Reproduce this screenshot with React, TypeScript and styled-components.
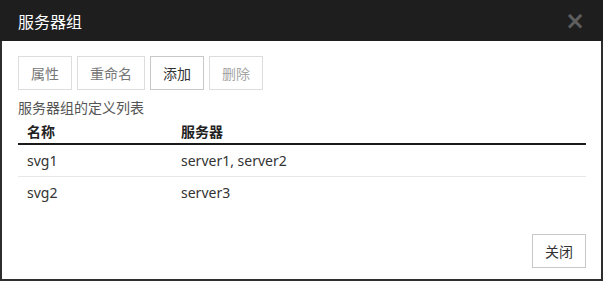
import * as React from 'react';
import styled, { createGlobalStyle } from 'styled-components';

const GlobalStyle = createGlobalStyle`
    html, body {
        margin: 0;
        padding: 0;
        background: #ffffff;
    }
    body {
        font-family: 'Noto Sans', 'Noto Sans CJK SC', sans-serif;
        font-size: 14px;
        color: #333333;
    }
`;

const Dialog = styled.div`
    width: 603px;
    height: 281px;
    display: flex;
    flex-direction: column;
    box-sizing: border-box;
`;

const Header = styled.div`
    height: 41px;
    flex: none;
    display: flex;
    align-items: center;
    justify-content: space-between;
    padding: 0 18px 0 18px;
    background-color: #1e1e1e;
    color: #ffffff;
`;

const Title = styled.h1`
    margin: 0;
    font-size: 16px;
    font-weight: 400;
    font-family: 'Noto Sans CJK SC', sans-serif;
`;

const CloseIcon = styled.span`
    font-family: 'DejaVu Sans', sans-serif;
    font-size: 24px;
    font-weight: 700;
    color: #5e5e5e;
    line-height: 1;
    margin-top: 1px;
`;

const Body = styled.div`
    flex: 1;
    display: flex;
    flex-direction: column;
    border: 2px solid #2e2e2e;
    border-top: none;
    padding: 15px 15px 11px 16px;
`;

const Toolbar = styled.div`
    display: flex;
    gap: 5px;
`;

type ButtonProps = {
    tone: 'normal' | 'active' | 'disabled'
};

const Button = styled.button<ButtonProps>`
    height: 34px;
    padding: 0 12px;
    background: #ffffff;
    font-family: 'Noto Sans CJK SC', sans-serif;
    font-size: 14px;
    border: 1px solid ${props => props.tone === 'active' ? '#c8c8c8' : '#dddddd'};
    color: ${props => props.tone === 'active' ? '#333333' : props.tone === 'disabled' ? '#a5a5a5' : '#777777'};
`;

const Caption = styled.div`
    margin-top: 8px;
    color: #555555;
    font-family: 'Noto Sans CJK SC', sans-serif;
    line-height: 18px;
`;

const Table = styled.table`
    border-collapse: collapse;
    width: 100%;
    margin-top: 2px;
`;

const HeadCell = styled.th<{ width?: number }>`
    text-align: left;
    font-weight: 700;
    font-family: 'Noto Sans CJK SC', sans-serif;
    color: #222222;
    height: 25px;
    padding: 0 9px;
    border-bottom: 2px solid #1a1a1a;
    width: ${props => props.width ? props.width + 'px' : 'auto'};
`;

const Row = styled.tr`
    & + & td {
        border-top: 1px solid #e8e8e8;
    }
`;

const Cell = styled.td`
    height: 31px;
    padding: 0 9px;
    color: #333333;
    font-family: 'Noto Sans', 'Noto Sans CJK SC', sans-serif;
`;

const Footer = styled.div`
    margin-top: auto;
    display: flex;
    justify-content: flex-end;
`;

const servers = [
    { name: 'svg1', members: 'server1, server2' },
    { name: 'svg2', members: 'server3' },
];

const App: React.FC = () => {
    return (
        <>
            <GlobalStyle />
            <Dialog>
                <Header>
                    <Title>服务器组</Title>
                    <CloseIcon>×</CloseIcon>
                </Header>
                <Body>
                    <Toolbar>
                        <Button tone="normal">属性</Button>
                        <Button tone="normal">重命名</Button>
                        <Button tone="active">添加</Button>
                        <Button tone="disabled">删除</Button>
                    </Toolbar>
                    <Caption>服务器组的定义列表</Caption>
                    <Table>
                        <thead>
                            <tr>
                                <HeadCell width={136}>名称</HeadCell>
                                <HeadCell>服务器</HeadCell>
                            </tr>
                        </thead>
                        <tbody>
                            {servers.map(s => (
                                <Row key={s.name}>
                                    <Cell>{s.name}</Cell>
                                    <Cell>{s.members}</Cell>
                                </Row>
                            ))}
                        </tbody>
                    </Table>
                    <Footer>
                        <Button tone="active">关闭</Button>
                    </Footer>
                </Body>
            </Dialog>
        </>
    );
};

export default App;
